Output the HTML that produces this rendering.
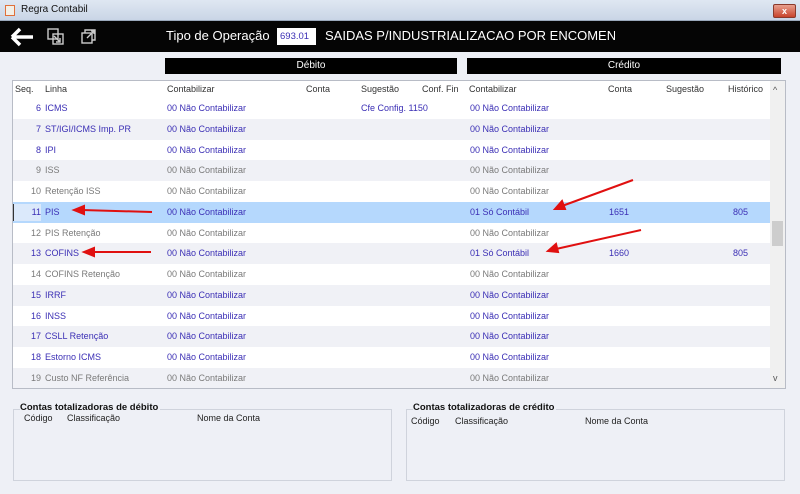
<!DOCTYPE html>
<html><head><meta charset="utf-8"><style>
*{margin:0;padding:0;box-sizing:border-box}
body{width:800px;height:494px;overflow:hidden;background:#eef0f6;font-family:"Liberation Sans",sans-serif;font-size:9px;position:relative}
.abs{position:absolute}
.title{left:0;top:0;width:800px;height:21px;background:linear-gradient(#dfe7f2,#c9d5e6);border-bottom:1px solid #9aa8bb}
.tb{left:0;top:21px;width:800px;height:31px;background:#050505}
.bar{background:#000;color:#fff;font-size:10px;text-align:center;line-height:16px;height:16px;top:58px}
.grid{left:12px;top:80px;width:774px;height:309px;border:1px solid #b8bcc6;background:#fff;overflow:hidden}
.row{position:absolute;left:0;width:757px;height:20.75px;line-height:20px}
.row span{position:absolute;white-space:nowrap;top:0}
.b{color:#3b2fb5}.g{color:#7a7a7a}
.hdr span{color:#333;line-height:17px}
.grp{border:1px solid #cfd3dc;top:409px;height:72px;width:379px}
.grp .t{position:absolute;top:-8px;left:6px;background:#eef0f6;font-weight:bold;font-size:9.5px;color:#111;padding-right:2px;line-height:12px}
.grp span{position:absolute;color:#222}
</style></head><body>
<div class="abs title"></div>
<div class="abs" style="left:5px;top:5px;width:10px;height:11px;background:#f2efe6;border:1px solid #e0703a"></div>
<div class="abs" style="left:21px;top:4px;font-size:10px;color:#111">Regra Contabil</div>
<div class="abs" style="left:773px;top:4px;width:23px;height:14px;background:linear-gradient(#e8a08f,#c8432b);border:1px solid #8a3a2c;border-radius:2px;color:#fff;font-size:9px;text-align:center;line-height:12px;font-weight:bold">x</div>
<div class="abs tb"></div>
<svg class="abs" style="left:8px;top:25px" width="100" height="24" viewBox="0 0 100 24">
<path d="M4 12H25M4 12L12 4M4 12L12 20" stroke="#fff" stroke-width="3.5" fill="none"/>
<rect x="40" y="4" width="10" height="10" fill="none" stroke="#ccc" stroke-width="1.4"/>
<rect x="45" y="9" width="10" height="10" fill="none" stroke="#ccc" stroke-width="1.4"/>
<path d="M46 11l6 6M52 13v4h-4" stroke="#ccc" stroke-width="1.4" fill="none"/>
<rect x="74" y="8" width="10" height="10" fill="none" stroke="#ccc" stroke-width="1.4"/>
<path d="M77 8V5h10v10h-3M79 13l7-7M83 6h3v3" stroke="#ccc" stroke-width="1.4" fill="none"/>
</svg>
<div class="abs" style="left:166px;top:28px;color:#fff;font-size:13px">Tipo de Operação</div>
<div class="abs" style="left:277px;top:28px;width:39px;height:17px;background:#fff;color:#3b2fb5;font-size:9.5px;line-height:17px;padding-left:3px">693.01</div>
<div class="abs" style="left:325px;top:28px;color:#fff;font-size:13px;width:290px;overflow:hidden;white-space:nowrap">SAIDAS P/INDUSTRIALIZACAO POR ENCOMENDA</div>
<div class="abs bar" style="left:165px;width:292px">Débito</div>
<div class="abs bar" style="left:467px;width:314px">Crédito</div>
<div class="abs grid">
<div class="row hdr" style="top:0;height:17px"><span style="left:2px">Seq.</span><span style="left:32px">Linha</span><span style="left:154px">Contabilizar</span><span style="left:293px">Conta</span><span style="left:348px">Sugestão</span><span style="left:409px">Conf. Fin</span><span style="left:456px">Contabilizar</span><span style="left:595px">Conta</span><span style="left:653px">Sugestão</span><span style="left:715px">Histórico</span></div>
<div style="position:absolute;left:757px;top:0;width:16px;height:307px;background:#f0f0f0"></div>
<div style="position:absolute;left:759px;top:140px;width:11px;height:25px;background:#cdcdcd"></div>
<div style="position:absolute;left:760px;top:4px;font-size:9px;color:#555">^</div>
<div style="position:absolute;left:760px;top:292px;font-size:9px;color:#555">v</div>
<div id="rows"></div>
</div>
<div class="abs grp" style="left:13px"><div class="t">Contas totalizadoras de débito</div><span style="left:10px;top:3px">Código</span><span style="left:53px;top:3px">Classificação</span><span style="left:183px;top:3px">Nome da Conta</span></div>
<div class="abs grp" style="left:406px"><div class="t">Contas totalizadoras de crédito</div><span style="left:4px;top:6px">Código</span><span style="left:48px;top:6px">Classificação</span><span style="left:178px;top:6px">Nome da Conta</span></div>
<svg class="abs" style="left:0;top:0;pointer-events:none" width="800" height="494">
<g stroke="#e01010" stroke-width="2" fill="#e01010">
<line x1="152" y1="212" x2="82" y2="210"/><polygon points="74,210 84,206 84,214"/>
<line x1="151" y1="252" x2="92" y2="252"/><polygon points="84,252 94,248 94,256"/>
<line x1="633" y1="180" x2="562" y2="206"/><polygon points="555,209 562,201 565,209"/>
<line x1="641" y1="230" x2="556" y2="249"/><polygon points="548,251 556,244 558,252"/>
</g></svg>
<script>
var d=[[6,"ICMS","b","Cfe Config. 1150","b"],[7,"ST/IGI/ICMS Imp. PR","b","","b"],[8,"IPI","b","","b"],[9,"ISS","g","","g"],[10,"Retenção ISS","g","","g"],[11,"PIS","b","","S1651"],[12,"PIS Retenção","g","","g"],[13,"COFINS","b","","S1660"],[14,"COFINS Retenção","g","","g"],[15,"IRRF","b","","b"],[16,"INSS","b","","b"],[17,"CSLL Retenção","b","","b"],[18,"Estorno ICMS","b","","b"],[19,"Custo NF Referência","g","","g"]];
var h="";d.forEach(function(r,i){var top=17+i*20.75;var bg=r[0]==11?"#b5d8fd":(r[0]%2?"#f0f1f6":"#fff");var c=r[2];
h+='<div class="row" style="top:'+top+'px;background:'+bg+'">';
if(r[0]==11)h+='<span style="left:0;top:2px;width:28px;height:17px;background:#dbe9fb;border-left:1px solid #333"></span>';
h+='<span class="'+c+'" style="right:'+(757-28)+'px">'+r[0]+'</span><span class="'+c+'" style="left:32px">'+r[1]+'</span><span class="'+c+'" style="left:154px">00 Não Contabilizar</span>';
if(r[3])h+='<span class="b" style="left:348px">'+r[3]+'</span>';
if(r[4][0]=="S")h+='<span class="b" style="left:457px">01 Só Contábil</span><span class="b" style="left:596px">'+r[4].slice(1)+'</span><span class="b" style="left:720px">805</span>';
else h+='<span class="'+r[4]+'" style="left:457px">00 Não Contabilizar</span>';
h+='</div>';});
document.getElementById("rows").innerHTML=h;
</script>
</body></html>
